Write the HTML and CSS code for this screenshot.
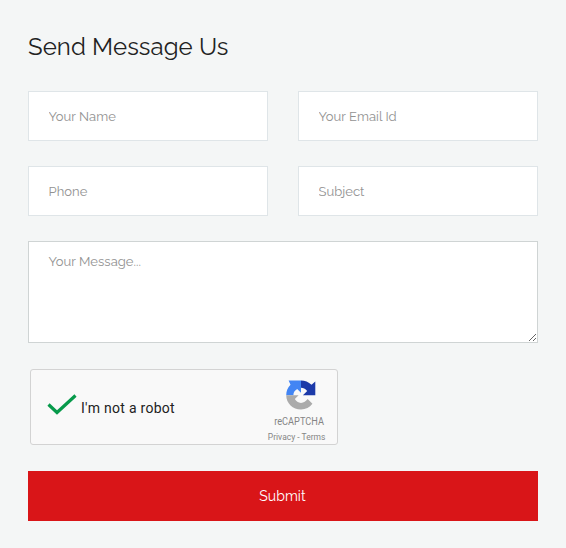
FILE: index.html
```html
<!DOCTYPE html>
<html lang="en">
<head>
<meta charset="utf-8">
<title>Send Message Us</title>
<link rel="stylesheet" href="styles.css">
</head>
<body>
<form class="contact">
  <h2 class="title">Send Message Us</h2>
  <div class="fields">
    <input class="field name" type="text" placeholder="Your Name">
    <input class="field email" type="text" placeholder="Your Email Id">
    <input class="field phone" type="text" placeholder="Phone">
    <input class="field subject" type="text" placeholder="Subject">
  </div>
  <textarea class="field message" placeholder="Your Message..."></textarea>
  <div class="captcha">
    <svg class="check" viewBox="0 0 30 22" width="30" height="22"><path d="M1.5 10.5 L10 18.5 L28.500 1.500" fill="none" stroke="#079a4b" stroke-width="3.2"/></svg>
    <span class="label">I'm not a robot</span>
    <div class="brand">
      <svg class="logo" viewBox="0 0 32 32" width="32" height="32">
        <path fill="#1c3aa9" d="M16 .5C20 .5 24 2 27 5L31 1.500V16H18L22.500 11.500C20.500 9 18.500 8 16 8Z"/>
        <path fill="#4285f4" d="M.5 16C.5 11.500 2 8 5 5L3 .5H16V13.500L12 9.500C9.500 11 8 13 8 16Z"/>
        <path fill="#ababab" d="M.5 16H13.500L9.500 20C11 22.500 13 24 16 24C19 24 21 22.500 23 20L28 25C25 29 21 31 16 31C7.500 31 .5 24.500 .5 16Z"/>
      </svg>
      <span class="brand-name">reCAPTCHA</span>
      <span class="legal">Privacy - Terms</span>
    </div>
  </div>
  <button class="submit" type="button">Submit</button>
</form>
</body>
</html>
```
FILE: styles.css
```css
* { box-sizing: border-box; }
body { margin: 0; background: #f4f6f6; font-family: Raleway, Lato, sans-serif; }
.contact { display: flex; flex-direction: column; padding: 31px 28px 27px; }
.title { margin: 0 0 28px; font-size: 24px; line-height: 32px; font-weight: 450; color: #222; letter-spacing: 0.08px; }
.fields { display: grid; grid-template-columns: 1fr 1fr; gap: 25px 30px; margin-bottom: 25px; }
.field { width: 100%; height: 50px; margin: 0; padding: 0 20px 0 19.5px; border: 1px solid #dfe5e8; border-radius: 0; background: #fff; font: 13px/20px Raleway, Lato, sans-serif; letter-spacing: 0.04px; color: #555; }
.field::placeholder { color: #929292; opacity: 1; }
.message { display: block; height: 102px; padding: 10px 20px 10px 19.5px; border-color: #cfd4d4; resize: both; }
.captcha { display: flex; width: 308px; height: 76px; margin: 26px 0 26px 2px; border: 1px solid #d3d3d3; border-radius: 3px; background: #f9f9f9; font-family: Roboto, sans-serif; }
.check { margin: 23.5px 0 0 16px; }
.label { width: 187px; margin: 28px 0 0 4px; font-size: 14px; line-height: 20px; letter-spacing: .28px; color: #222; white-space: nowrap; }
.brand { display: flex; flex-direction: column; align-items: center; width: 60px; padding-top: 9.5px; color: #858585; white-space: nowrap; }
.logo { margin-left: 5px; }
.brand-name { margin: 4px 0 0 3px; font-size: 11.5px; line-height: 14px; transform: scaleX(.8); }
.legal { margin: 2px 0 0 -2px; font-size: 9px; line-height: 14px; transform: scaleX(.94); }
.submit { height: 50px; padding: 0 1px 0 0; border: 0; background: #d91518; color: #fff; font: 14px/20px Raleway, Lato, sans-serif; font-weight: 450; letter-spacing: .06px; }
```
